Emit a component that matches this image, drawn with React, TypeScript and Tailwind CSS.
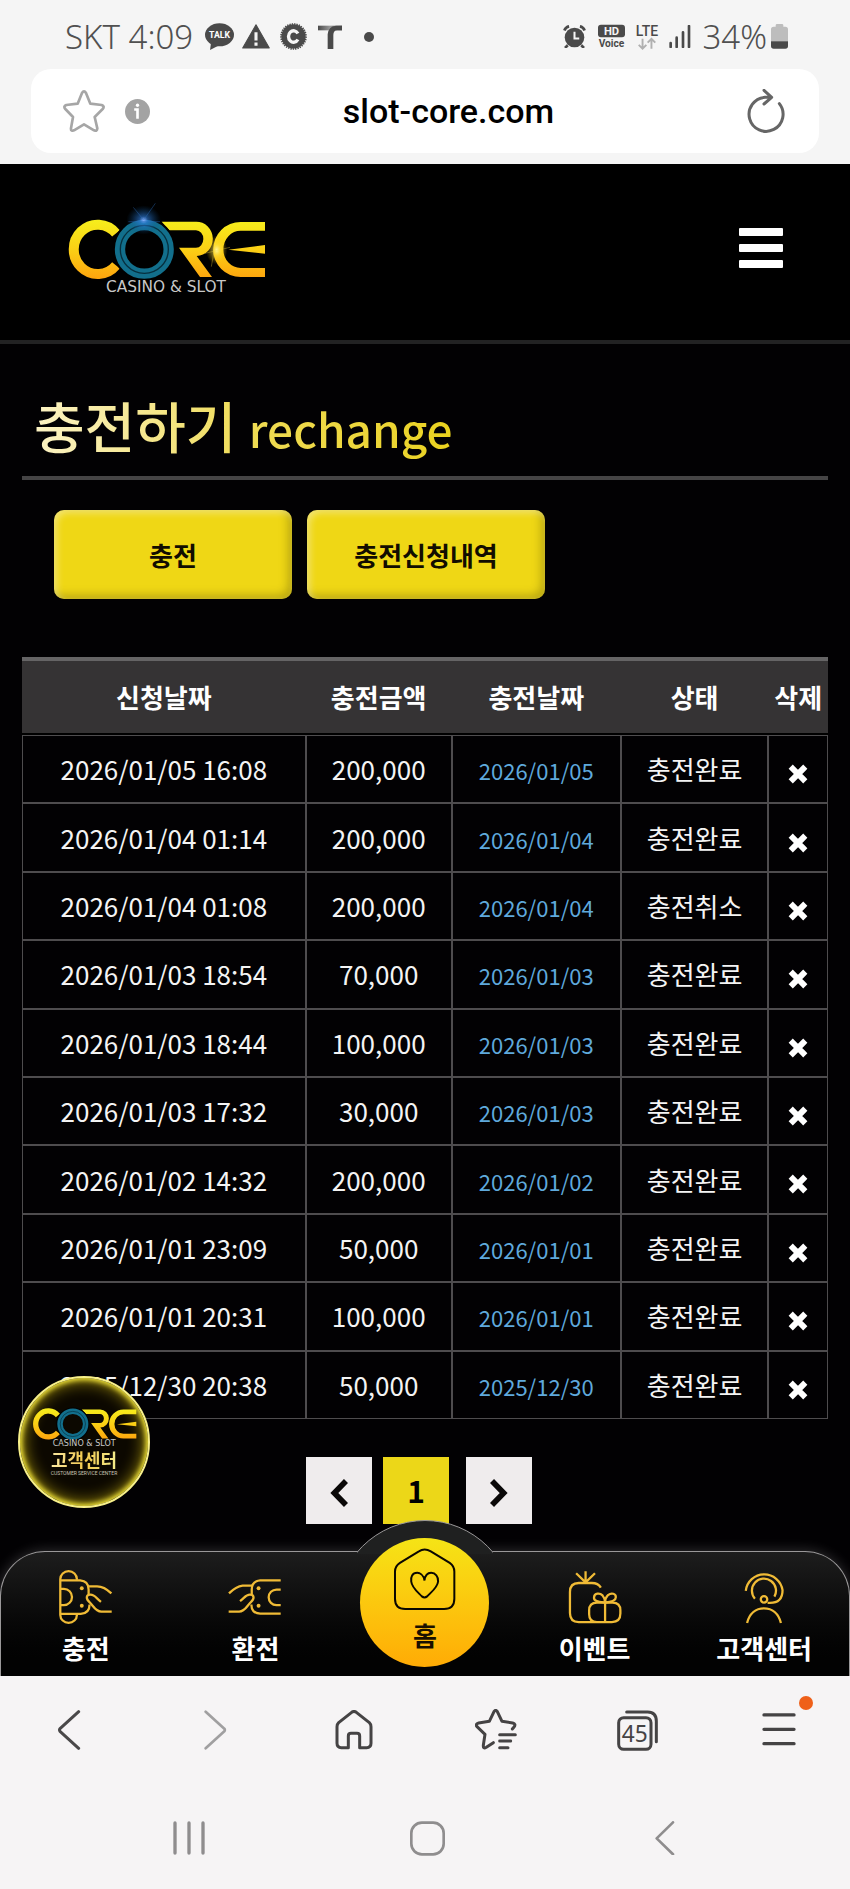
import type { ReactNode } from "react"

type Row = { requested: string; amount: string; charged: string; status: string }

const rows: Row[] = [
  { requested: "2026/01/05 16:08", amount: "200,000", charged: "2026/01/05", status: "충전완료" },
  { requested: "2026/01/04 01:14", amount: "200,000", charged: "2026/01/04", status: "충전완료" },
  { requested: "2026/01/04 01:08", amount: "200,000", charged: "2026/01/04", status: "충전취소" },
  { requested: "2026/01/03 18:54", amount: "70,000", charged: "2026/01/03", status: "충전완료" },
  { requested: "2026/01/03 18:44", amount: "100,000", charged: "2026/01/03", status: "충전완료" },
  { requested: "2026/01/03 17:32", amount: "30,000", charged: "2026/01/03", status: "충전완료" },
  { requested: "2026/01/02 14:32", amount: "200,000", charged: "2026/01/02", status: "충전완료" },
  { requested: "2026/01/01 23:09", amount: "50,000", charged: "2026/01/01", status: "충전완료" },
  { requested: "2026/01/01 20:31", amount: "100,000", charged: "2026/01/01", status: "충전완료" },
  { requested: "2025/12/30 20:38", amount: "50,000", charged: "2025/12/30", status: "충전완료" },
]

function Logo({ id, className, glow = false }: { id: string; className: string; glow?: boolean }) {
  return (
    <svg viewBox="195 90 609 285" className={className} role="img" aria-label="CORE Casino & Slot">
      <defs>
        <linearGradient id={`${id}-gold`} gradientUnits="userSpaceOnUse" x1="0" y1="150" x2="0" y2="325">
          <stop offset="0" stopColor="#f6ee1c" />
          <stop offset="0.5" stopColor="#fbd015" />
          <stop offset="1" stopColor="#fda50e" />
        </linearGradient>
        <radialGradient id={`${id}-blue`}>
          <stop offset="0" stopColor="#8fb4ff" />
          <stop offset="0.25" stopColor="#2f7fe0" stopOpacity="0.6" />
          <stop offset="1" stopColor="#0a4c88" stopOpacity="0" />
        </radialGradient>
        <radialGradient id={`${id}-flare`}>
          <stop offset="0" stopColor="#fff7a0" />
          <stop offset="0.4" stopColor="#ffe040" stopOpacity="0.5" />
          <stop offset="1" stopColor="#ffc800" stopOpacity="0" />
        </radialGradient>
      </defs>
      <path d="M348 190 A72 74 0 1 0 348 286" fill="none" stroke={`url(#${id}-gold)`} strokeWidth="30" />
      <g fill={`url(#${id}-gold)`}>
        <path d="M485 155 H588 A49 51 0 0 1 590 258 L636 321 H600 L537 233 H588 A22 26 0 0 0 588 181 H508 Z" />
        <path d="M795 156 H722 A82 82 0 0 0 722 321 H795 V294 H722 A52 56 0 0 1 722 182 H795 Z" />
        <path d="M685 239 L795 225 V251 Z" />
      </g>
      <circle cx="433" cy="238" r="91" fill="none" stroke="#000" strokeWidth="7" />
      <circle cx="433" cy="238" r="73" fill="none" stroke="#126f8c" strokeWidth="31" />
      <circle cx="433" cy="238" r="72" fill="none" stroke="#06303f" strokeWidth="4" />
      {glow && (
        <>
          <ellipse cx="431" cy="150" rx="52" ry="44" fill={`url(#${id}-blue)`} />
          <path d="M431 150 L466 100 M431 150 L400 112 M385 155 H480" stroke="#2d6fc0" strokeWidth="2" opacity="0.6" />
          <ellipse cx="650" cy="240" rx="32" ry="44" fill={`url(#${id}-flare)`} />
          <path d="M650 200 L634 290 M615 250 L690 232" stroke="#ffdc3c" strokeWidth="2" opacity="0.5" />
        </>
      )}
      <text x="498" y="365" textAnchor="middle" fill="#c8c8c8" fontSize="46" fontFamily="DejaVu Sans, sans-serif">
        CASINO &amp; SLOT
      </text>
    </svg>
  )
}

function StatusBar() {
  return (
    <div className="flex h-[69px] items-center justify-between pt-1 pl-[65px] pr-[62px] font-['Noto_Sans',sans-serif] text-[33px] leading-8 text-[#505050]">
      <div className="flex items-center">
        <span className="font-light">SKT 4:09</span>
        <svg viewBox="0 0 86 80" className="ml-3 w-[29px]" aria-hidden="true">
          <ellipse cx="43" cy="35" rx="43" ry="34" fill="#4a4a4a" />
          <path d="M18 56 L15 80 L42 66 Z" fill="#4a4a4a" />
          <text x="43" y="44" textAnchor="middle" fontSize="26" fontWeight="700" fill="#fff" fontFamily="Roboto, sans-serif">
            TALK
          </text>
        </svg>
        <svg viewBox="0 0 82 72" className="ml-2 w-[28px]" aria-hidden="true">
          <path d="M41 2 L80 70 H2 Z" fill="#4a4a4a" stroke="#4a4a4a" strokeWidth="3" strokeLinejoin="round" />
          <path d="M41 24 V48 M41 54 V64" stroke="#f5f5f5" strokeWidth="9" />
        </svg>
        <svg viewBox="0 0 80 80" className="ml-2.5 w-[27px]" aria-hidden="true">
          <circle cx="40" cy="40" r="36" fill="#4a4a4a" />
          <circle cx="40" cy="40" r="37" fill="none" stroke="#4a4a4a" strokeWidth="5" strokeDasharray="4 3" />
          <path d="M53 31 A15 17 0 1 0 53 49" fill="none" stroke="#f5f5f5" strokeWidth="10" />
        </svg>
        <svg viewBox="0 0 72 72" className="ml-[11px] w-[24px]" aria-hidden="true">
          <defs>
            <linearGradient id="t-fade">
              <stop offset="0" stopColor="#4a4a4a" />
              <stop offset="0.5" stopColor="#999" />
              <stop offset="1" stopColor="#4a4a4a" />
            </linearGradient>
          </defs>
          <path d="M0 2 H72 V16 H0 Z" fill="url(#t-fade)" />
          <path d="M72 2 V16 H58 Q46 16 46 30 V72 H29 V28 Q31 4 54 2 Z" fill="#4a4a4a" />
        </svg>
        <span className="ml-[22px] size-[10px] rounded-full bg-[#4a4a4a]" />
      </div>
      <div className="flex items-center">
        <svg viewBox="0 0 68 70" className="w-[23px]" aria-hidden="true">
          <circle cx="34" cy="37" r="29" fill="#4a4a4a" />
          <path d="M14 60 L6 68 M54 60 L62 68 M4 16 Q8 6 18 4 M64 16 Q60 6 50 4" stroke="#4a4a4a" strokeWidth="8" fill="none" />
          <path d="M34 20 V40 H48" stroke="#f5f5f5" strokeWidth="6" fill="none" />
        </svg>
        <svg viewBox="0 -8 82 88" className="ml-3 w-[27px] overflow-visible" aria-hidden="true">
          <rect width="82" height="38" rx="9" fill="#4a4a4a" />
          <text x="41" y="31" textAnchor="middle" fontSize="34" fontWeight="700" fill="#f5f5f5" fontFamily="Roboto, sans-serif">
            HD
          </text>
          <text x="41" y="68" textAnchor="middle" fontSize="31" fontWeight="700" fill="#4a4a4a" fontFamily="Roboto, sans-serif">
            Voice
          </text>
        </svg>
        <svg viewBox="-4 -10 88 100" className="ml-2 w-[28px] overflow-visible" aria-hidden="true">
          <text x="40" y="36" textAnchor="middle" fontSize="44" fontWeight="500" fill="#4a4a4a" fontFamily="Roboto, sans-serif">
            LTE
          </text>
          <path d="M26 46 V76 M14 65 L26 77 L38 65 M54 77 V47 M42 58 L54 46 L66 58" stroke="#b0b0b0" strokeWidth="6" fill="none" />
        </svg>
        <svg viewBox="0 0 66 70" className="ml-2 w-[22px]" aria-hidden="true">
          <path d="M5 54 V66 M23 38 V66 M42 22 V66 M60 3 V66" stroke="#4a4a4a" strokeWidth="8" strokeLinecap="round" />
        </svg>
        <span className="ml-3 font-light">34%</span>
        <svg viewBox="0 0 51 74" className="ml-1 w-[17px]" aria-hidden="true">
          <path d="M14 8 V4 Q14 0 18 0 H33 Q37 0 37 4 V8 H43 Q51 8 51 16 V52 H0 V16 Q0 8 8 8 Z" fill="#bdbdbd" />
          <path d="M0 52 H51 V66 Q51 74 43 74 H8 Q0 74 0 66 Z" fill="#4a4a4a" />
        </svg>
      </div>
    </div>
  )
}

function AddressBar() {
  return (
    <div className="mx-[31px] flex h-[84px] items-center justify-between rounded-[20px] bg-white pl-8 pr-[34px]">
      <div className="flex items-center gap-5">
        <button type="button" aria-label="즐겨찾기 추가">
          <svg viewBox="0 0 126 126" className="w-[42px]" fill="none" stroke="#a6a6a6" strokeWidth="8" strokeLinejoin="round">
            <path d="M57 9 Q63 -1 69 9 L82 41 L116 45 Q126 49 119 57 L95 81 L103 115 Q102 125 93 121 L63 103 L33 121 Q23 125 24 115 L30 81 L7 57 Q0 49 10 45 L44 41 Z" />
          </svg>
        </button>
        <button type="button" aria-label="사이트 정보">
          <svg viewBox="0 0 76 76" className="w-[25px]">
            <circle cx="38" cy="38" r="38" fill="#a3a3a3" />
            <circle cx="38" cy="19" r="5" fill="#fff" />
            <path d="M28 32 H38 V60" fill="none" stroke="#fff" strokeWidth="8" />
          </svg>
        </button>
      </div>
      <span className="font-[Roboto,sans-serif] text-[34px] font-medium leading-10 text-black">slot-core.com</span>
      <button type="button" aria-label="새로고침">
        <svg viewBox="0 0 114 132" className="w-[38px]" fill="none" stroke="#666" strokeWidth="9" strokeLinecap="round" strokeLinejoin="round">
          <path d="M97 44 A51 51 0 1 1 54 25 H72 M51 4 L74 25 L51 45" />
        </svg>
      </button>
    </div>
  )
}

function SiteHeader() {
  return (
    <header className="flex items-center justify-between border-b-4 border-[#222223] bg-black pl-[65px] pr-[67px] pt-9 pb-[45px]">
      <a href="#home">
        <Logo id="logo" className="h-[95px] w-[203px]" glow />
      </a>
      <button type="button" aria-label="메뉴" className="flex w-11 flex-col gap-2">
        <span className="h-2 rounded-[1px] bg-white" />
        <span className="h-2 rounded-[1px] bg-white" />
        <span className="h-2 rounded-[1px] bg-white" />
      </button>
    </header>
  )
}

function TabButton({ children }: { children: ReactNode }) {
  return (
    <button
      type="button"
      className="h-[89px] w-[238px] rounded-[10px] bg-[#efd715] text-[26px] font-bold text-[#120d00] shadow-[inset_3px_3px_7px_rgba(255,255,255,0.4),inset_-4px_-4px_8px_rgba(90,80,0,0.35)]"
    >
      {children}
    </button>
  )
}

function HistoryTable() {
  const cell = "border border-[#4e4c4e] p-0"
  const head = "border-t-4 border-b-2 border-t-[#656465] border-b-black p-0"
  return (
    <table className="mt-[58px] h-[762px] w-full table-fixed border-separate border-spacing-0 text-center text-[26px] leading-9 text-[#f4f4f4]">
      <colgroup>
        <col className="w-[35.2%]" />
        <col className="w-[18.1%]" />
        <col className="w-[21%]" />
        <col className="w-[18.3%]" />
        <col className="w-[7.4%]" />
      </colgroup>
      <thead>
        <tr className="h-[78px] whitespace-nowrap bg-[#353334] font-bold text-white">
          <th className={head}>신청날짜</th>
          <th className={head}>충전금액</th>
          <th className={head}>충전날짜</th>
          <th className={head}>상태</th>
          <th className={head}>삭제</th>
        </tr>
      </thead>
      <tbody>
        {rows.map((row) => (
          <tr key={row.requested}>
            <td className={cell}>{row.requested}</td>
            <td className={cell}>{row.amount}</td>
            <td className="border border-[#4e4c4e] px-0 pt-[2px] pb-0 text-[22px] text-[#5fa9dc]">{row.charged}</td>
            <td className={cell}>{row.status}</td>
            <td className={cell}>
              <button type="button" aria-label={`${row.requested} 삭제`} className="mt-[2px] align-middle">
                <svg viewBox="0 0 54 54" className="w-5" stroke="#fff" strokeWidth="16" strokeLinecap="square">
                  <path d="M13 13 L41 41 M41 13 L13 41" />
                </svg>
              </button>
            </td>
          </tr>
        ))}
      </tbody>
    </table>
  )
}

function Pagination() {
  return (
    <div className="mt-[38px] flex h-[67px] justify-center pr-3">
      <button type="button" aria-label="이전" className="flex w-[66px] items-center justify-center bg-[#efeced]">
        <svg viewBox="0 0 54 84" className="mt-1 w-[18px]" fill="none" stroke="#0a0808" strokeWidth="17">
          <path d="M48 6 L13 42 L48 78" />
        </svg>
      </button>
      <button type="button" aria-current="page" className="ml-[11px] w-[66px] bg-[#ecd718] text-[30px] font-bold text-black">
        1
      </button>
      <button type="button" aria-label="다음" className="ml-[17px] flex w-[66px] items-center justify-center bg-[#efeced]">
        <svg viewBox="0 0 54 84" className="mt-1 w-[18px]" fill="none" stroke="#0a0808" strokeWidth="17">
          <path d="M6 6 L41 42 L6 78" />
        </svg>
      </button>
    </div>
  )
}

function SupportBadge() {
  return (
    <a
      href="#support"
      className="absolute bottom-[43px] left-[18px] flex size-[132px] flex-col items-center rounded-full border-2 border-[#f8f08a] bg-[#0c0800] pt-5 shadow-[inset_0_0_5px_2px_#efe23a,inset_0_0_16px_4px_#93820c]"
    >
      <Logo id="badge" className="h-[50px] w-[107px]" />
      <span className="bg-linear-to-r from-[#fbe9a0] via-[#f2c94c] to-[#f3ec8a] bg-clip-text text-[18px] font-bold leading-[22px] text-transparent">고객센터</span>
      <span className="font-[Roboto,sans-serif] text-[5px] leading-[6px] text-[#c8c4b4]">CUSTOMER SERVICE CENTER</span>
    </a>
  )
}

function NavItem({ label, viewBox, children }: { label: string; viewBox: string; children: ReactNode }) {
  return (
    <a href="#nav" className="flex flex-col items-center pt-[18px] text-[26px] font-bold leading-8 text-white">
      <svg viewBox={viewBox} className="mb-2 h-[54px] w-[54px]" fill="none" stroke="#f0bb36" strokeWidth="7" aria-hidden="true">
        {children}
      </svg>
      {label}
    </a>
  )
}

function BottomNav() {
  return (
    <nav className="relative h-[125px] rounded-t-[45px] border border-b-0 border-[#9a9899] bg-linear-to-b from-[#1d1d1d] to-[#020202] to-85% shadow-[0_0_14px_rgba(255,255,255,0.2)]">
      {/* raised arc behind the home button */}
      <div className="absolute -top-8 left-1/2 h-[34px] w-[136px] -translate-x-1/2 overflow-hidden">
        <div className="-ml-[21px] size-[178px] rounded-full border border-[#9a9899] bg-[#1f2020]" />
      </div>
      <div className="relative grid grid-cols-5">
        <NavItem label="충전" viewBox="174 688 164 166">
          <path d="M228 718 v-2 a25 24 0 0 0 -51 0 V826 a25 24 0 0 0 51 0 v-2" />
          <path d="M178 720 H238 Q264 722 264 748 V762 M178 823 H240 Q267 821 267 794" />
          <path d="M178 746 H188 A25 25 0 0 1 188 796 H178" />
          <path d="M263 738 H290 Q312 738 334 760 M335 816 H303 C285 816 280 800 268 788 C254 776 256 764 270 764 C282 764 286 773 302 786" />
          <circle cx="243" cy="744" r="6" fill="#f0bb36" stroke="none" />
          <circle cx="243" cy="798" r="6" fill="#f0bb36" stroke="none" />
        </NavItem>
        <NavItem label="환전" viewBox="684 688 164 166">
          <path d="M845 720 H782 Q756 722 756 748 V762 M845 822 H782 Q754 821 755 794" />
          <path d="M845 748 H832 A24 24 0 0 0 832 796 H845" />
          <path d="M757 736 H728 Q708 738 686 760 M685 816 H717 C735 816 740 800 752 788 C766 776 764 764 750 764 C738 764 734 773 720 784" />
          <circle cx="777" cy="744" r="6" fill="#f0bb36" stroke="none" />
          <circle cx="777" cy="798" r="6" fill="#f0bb36" stroke="none" />
        </NavItem>
        <a
          href="#home"
          className="-mt-[14px] flex size-[129px] flex-col items-center justify-self-center rounded-full bg-linear-to-b from-[#f5e416] to-[#ffab05] pt-[10px] text-[26px] font-bold leading-8 text-[#191000]"
        >
          <svg viewBox="160 142 190 190" className="mb-2 w-[63px]" fill="none" stroke="#0a0700" strokeWidth="6" aria-hidden="true">
            <path d="M238 152 L181 187 Q166 197 166 213 V295 Q166 326 197 326 H314 Q345 326 345 295 V213 Q345 197 331 187 L274 152 Q255 141 238 152 Z" />
            <path d="M255 240 C252 222 240 217 233 217 C218 217 213 230 215 243 C217 262 235 275 247 288 Q255 294 263 288 C275 275 294 262 296 243 C297 228 288 217 275 217 C265 217 257 224 255 240 Z" />
          </svg>
          홈
        </a>
        <NavItem label="이벤트" viewBox="428 688 164 166">
          <path d="M528 742 Q520 728 500 728 H460 Q433 728 433 756 V820 Q433 848 460 848 H562 Q588 848 588 822 V812 Q588 788 564 788 H516 Q492 788 492 812 V824 Q492 848 516 848" />
          <path d="M481 692 V726 M452 698 L481 726 L510 698 M541 788 V848" />
          <path d="M541 788 C525 786 505 785 507 772 C508 758 525 758 533 766 C538 772 541 780 541 788 C541 780 545 770 550 765 C560 757 575 760 574 772 C574 785 555 787 541 788" />
        </NavItem>
        <NavItem label="고객센터" viewBox="938 688 164 166">
          <path d="M964 752 A57 57 0 0 1 1077 750 Q1077 789 1038 789 H1031" />
          <path d="M992 776 A37 37 0 1 1 1052 770" />
          <circle cx="1020" cy="778" r="10" />
          <path d="M968 851 C975 822 995 806 1020 806 C1045 806 1065 822 1072 851" />
        </NavItem>
      </div>
    </nav>
  )
}

function BrowserToolbar() {
  const button = "relative flex h-[60px] w-[60px] items-center justify-center"
  return (
    <div className="grid grid-cols-6 justify-items-center pt-6">
      <button type="button" aria-label="뒤로" className={button}>
        <svg viewBox="0 0 120 120" className="w-10" fill="none" stroke="#4a4849" strokeWidth="9" strokeLinecap="round" strokeLinejoin="round">
          <path d="M83 5 L27 56 Q24 60 27 64 L83 115" />
        </svg>
      </button>
      <button type="button" aria-label="앞으로" className={button}>
        <svg viewBox="0 0 120 120" className="w-10" fill="none" stroke="#a09fa0" strokeWidth="8" strokeLinecap="round" strokeLinejoin="round">
          <path d="M41 5 L97 56 Q100 60 97 64 L41 115" />
        </svg>
      </button>
      <button type="button" aria-label="홈페이지" className={button}>
        <svg viewBox="0 0 120 120" className="w-10" fill="none" stroke="#454344" strokeWidth="9" strokeLinecap="round" strokeLinejoin="round">
          <path d="M53 7 L14 38 Q9 43 9 50 V100 Q9 113 22 113 H43 V78 Q43 70 51 70 H69 Q77 70 77 78 V113 H98 Q111 113 111 100 V50 Q111 43 106 38 L67 7 Q60 2 53 7 Z" />
        </svg>
      </button>
      <button type="button" aria-label="북마크" className={button}>
        <svg viewBox="0 0 126 124" className="w-[42px]" fill="none" stroke="#454344" strokeWidth="9" strokeLinecap="round" strokeLinejoin="round">
          <path d="M55 101 L34 115 Q24 121 25 109 L30 76 L6 53 Q0 45 11 42 L43 37 L57 8 Q62 0 67 8 L81 37 L113 42 Q124 45 117 54 L112 60" />
          <path d="M74 77 H121 M74 96 H107 M74 116 H99" />
        </svg>
      </button>
      <button type="button" aria-label="탭 45개" className={button}>
        <svg viewBox="0 0 123 123" className="w-[41px]" fill="none" stroke="#454344" strokeWidth="9" strokeLinecap="round">
          <rect x="5" y="23" width="97" height="95" rx="15" />
          <path d="M29 6 H92 Q118 6 118 34 V95" />
          <text x="53" y="97" textAnchor="middle" fontSize="68" fill="#454344" stroke="none" fontFamily="Noto Sans, sans-serif">
            45
          </text>
        </svg>
      </button>
      <button type="button" aria-label="브라우저 메뉴" className={button}>
        <svg viewBox="0 0 104 104" className="w-[34px]" stroke="#454344" strokeWidth="10" strokeLinecap="round">
          <path d="M6 6 H98 M6 50 H98 M6 94 H98" />
        </svg>
        <span className="absolute -top-1 -right-1 size-[14px] rounded-full bg-[#ef6019]" />
      </button>
    </div>
  )
}

function SystemNav() {
  return (
    <div className="grid grid-cols-3 justify-items-center pt-[55px] pb-[29px] pl-[70px] pr-[66px]">
      <button type="button" aria-label="최근 앱" className="h-[46px] w-[60px]">
        <svg viewBox="0 0 96 102" className="mx-auto w-8" stroke="#8f8d8e" strokeWidth="10" strokeLinecap="round">
          <path d="M6 6 V96 M48 6 V96 M90 6 V96" />
        </svg>
      </button>
      <button type="button" aria-label="홈 화면" className="h-[46px] w-[60px]">
        <svg viewBox="0 0 106 106" className="mx-auto w-[35px]" fill="none" stroke="#8f8d8e" strokeWidth="8">
          <rect x="4" y="5" width="98" height="96" rx="32" />
        </svg>
      </button>
      <button type="button" aria-label="이전 화면" className="h-[46px] w-[60px]">
        <svg viewBox="0 0 60 104" className="mx-auto w-5" fill="none" stroke="#8f8d8e" strokeWidth="8" strokeLinecap="round" strokeLinejoin="round">
          <path d="M54 4 L5 52 L54 100" />
        </svg>
      </button>
    </div>
  )
}

export default function App() {
  return (
    <div className="bg-[#f6f4f5] font-['Noto_Sans_CJK_KR',sans-serif]">
      <div className="bg-[#f5f5f5] pb-[11px]">
        <StatusBar />
        <AddressBar />
      </div>
      <div className="bg-[#020103]">
        <SiteHeader />
        <main className="relative px-[22px] pb-[27px]">
          <h1 className="border-b-4 border-[#454445] pt-12 pb-4 pl-3 text-[55px] font-medium leading-[64px]">
            <span className="bg-linear-to-r from-[#fcf3c4] via-[#f0dc55] to-[#ead21c] bg-clip-text text-transparent">
              충전하기 <span className="text-[46px]">rechange</span>
            </span>
          </h1>
          <div className="flex gap-[15px] px-8 pt-[30px]">
            <TabButton>충전</TabButton>
            <TabButton>충전신청내역</TabButton>
          </div>
          <HistoryTable />
          <Pagination />
          <SupportBadge />
        </main>
        <BottomNav />
      </div>
      <BrowserToolbar />
      <SystemNav />
    </div>
  )
}
